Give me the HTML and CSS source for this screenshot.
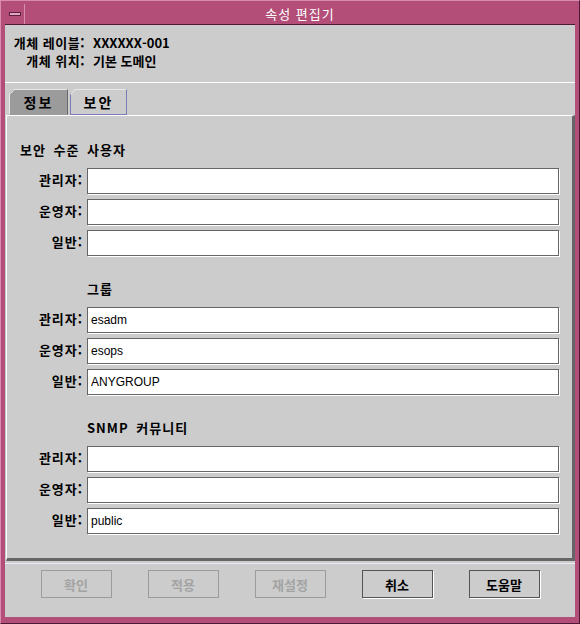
FILE: index.html
```html
<!DOCTYPE html>
<html lang="ko">
<head>
    <meta charset="UTF-8">
    <title>속성 편집기</title>
    <link rel="stylesheet" href="styles.css">
</head>
<body>
    <div class="window">
        <div class="titlebar">
            <div class="menu-button"><span class="menu-bar"></span></div>
            <div class="title">속성 편집기</div>
        </div>

        <div class="client">
            <div class="info">
                <span class="info-label">개체 레이블:</span>
                <span class="info-value">XXXXXX-001</span>
                <span class="info-label">개체 위치:</span>
                <span class="info-value">기본 도메인</span>
            </div>

            <div class="divider"></div>

            <div class="tabs">
                <div class="tab selected">정보</div>
                <div class="tab">보안</div>
            </div>

            <div class="panel">
                <h3 class="section-title first">보안 수준 사용자</h3>
                <div class="fields">
                    <label>관리자:</label><input type="text" value="">
                    <label>운영자:</label><input type="text" value="">
                    <label>일반:</label><input type="text" value="">
                </div>

                <h3 class="section-title">그룹</h3>
                <div class="fields">
                    <label>관리자:</label><input type="text" value="esadm">
                    <label>운영자:</label><input type="text" value="esops">
                    <label>일반:</label><input type="text" value="ANYGROUP">
                </div>

                <h3 class="section-title">SNMP 커뮤니티</h3>
                <div class="fields">
                    <label>관리자:</label><input type="text" value="">
                    <label>운영자:</label><input type="text" value="">
                    <label>일반:</label><input type="text" value="public">
                </div>
            </div>

            <div class="divider bottom"></div>

            <div class="buttons">
                <button disabled>확인</button>
                <button disabled>적용</button>
                <button disabled>재설정</button>
                <button>취소</button>
                <button>도움말</button>
            </div>
        </div>
    </div>
</body>
</html>
```

FILE: styles.css
```css
/* General Reset */
* {
    margin: 0;
    padding: 0;
    box-sizing: border-box;
}

body {
    font-family: "Noto Sans CJK KR", "Liberation Sans", sans-serif;
    font-size: 13px;
    color: #000;
    background-color: #b24e78;
}

/* window frame */
.window {
    width: 580px;
    height: 624px;
    background-color: #b24e78;
    border: 1px solid;
    border-color: #d98cb0 #4e1a33 #4e1a33 #d98cb0;
    padding: 3px 4px 6px 4px;
    display: flex;
    flex-direction: column;
}

.titlebar {
    height: 21px;
    display: flex;
    border-bottom: 1px solid #4e1a33;
}

.menu-button {
    width: 20px;
    display: flex;
    align-items: center;
    justify-content: center;
    border-right: 1px solid #d98cb0;
}

.menu-bar {
    width: 12px;
    height: 4px;
    background-color: #e4a4c2;
    border: 1px solid #5c2040;
}

.title {
    flex: 1;
    text-align: center;
    color: white;
    font-size: 13px;
    line-height: 19px;
    letter-spacing: 1px;
}

.client {
    flex: 1;
    background-color: #cccccc;
    display: flex;
    flex-direction: column;
}

/* object info */
.info {
    display: grid;
    grid-template-columns: 80px auto;
    column-gap: 8px;
    padding-top: 9px;
}

.info-label,
.info-value {
    font-weight: bold;
    line-height: 18px;
}

.info-label {
    text-align: right;
    letter-spacing: 0.5px;
}

.divider {
    height: 1px;
    margin-top: 12px;
    background-color: #ffffff;
}

.divider.bottom {
    margin-top: 2px;
    background-color: #ece8f4;
}

/* tabs */
.tabs {
    display: flex;
    gap: 2px;
    padding-left: 4px;
    margin-top: 6px;
    height: 26px;
}

.tab {
    position: relative;
    width: 57px;
    height: 26px;
    line-height: 24px;
    text-align: center;
    font-size: 14px;
    font-weight: bold;
    letter-spacing: 2px;
    background-color: #cccccc;
    border: 1px solid #7b7bb5;
    border-top-color: #e8e8e8;
    clip-path: polygon(5px 0, 100% 0, 100% 100%, 0 100%, 0 5px);
}

.tab::before {
    content: "";
    position: absolute;
    left: -1px;
    top: 4px;
    width: 8px;
    height: 1px;
    background-color: #e8e8e8;
    transform-origin: 0 0;
    transform: rotate(-45deg);
}

.tab.selected {
    width: 59px;
    background-color: #9b9b9b;
    border-color: #e8e8e8 #6a6a6a #9b9b9b #e8e8e8;
}

/* panel */
.panel {
    margin-left: 1px;
    height: 446px;
    border-top: 1px solid #ffffff;
    border-left: 1px solid #ffffff;
    border-right: 3px solid #666666;
    border-bottom: 3px solid #666666;
    padding: 26px 13px 0 0;
}

.section-title {
    font-size: 13px;
    font-weight: bold;
    line-height: 16px;
    letter-spacing: 1px;
    word-spacing: 3px;
    margin: 25px 0 10px 80px;
}

.section-title.first {
    margin-top: 0;
    margin-left: 13px;
}

.fields {
    display: grid;
    grid-template-columns: 76px 1fr;
    column-gap: 4px;
    row-gap: 5px;
}

.fields label {
    text-align: right;
    font-weight: bold;
    line-height: 24px;
    letter-spacing: 1px;
}

.fields input {
    height: 26px;
    background-color: white;
    border: 1px solid #666666;
    box-shadow: 1px 1px 0 #ffffff;
    padding: 0 3px;
    font-family: "Liberation Sans", Arial, sans-serif;
    font-size: 12px;
    color: #000;
    outline: none;
}

/* dialog buttons */
.buttons {
    display: flex;
    justify-content: center;
    gap: 36px;
    margin-top: 6px;
}

.buttons button {
    width: 71px;
    height: 28px;
    background-color: #cccccc;
    border: 1px solid #555555;
    box-shadow: 1px 1px 0 #ffffff;
    font-family: "Noto Sans CJK KR", sans-serif;
    font-size: 13px;
    font-weight: bold;
    color: #000;
}

.buttons button:disabled {
    border-color: #9c9c9c;
    box-shadow: none;
    color: #a3a3a3;
}
```
